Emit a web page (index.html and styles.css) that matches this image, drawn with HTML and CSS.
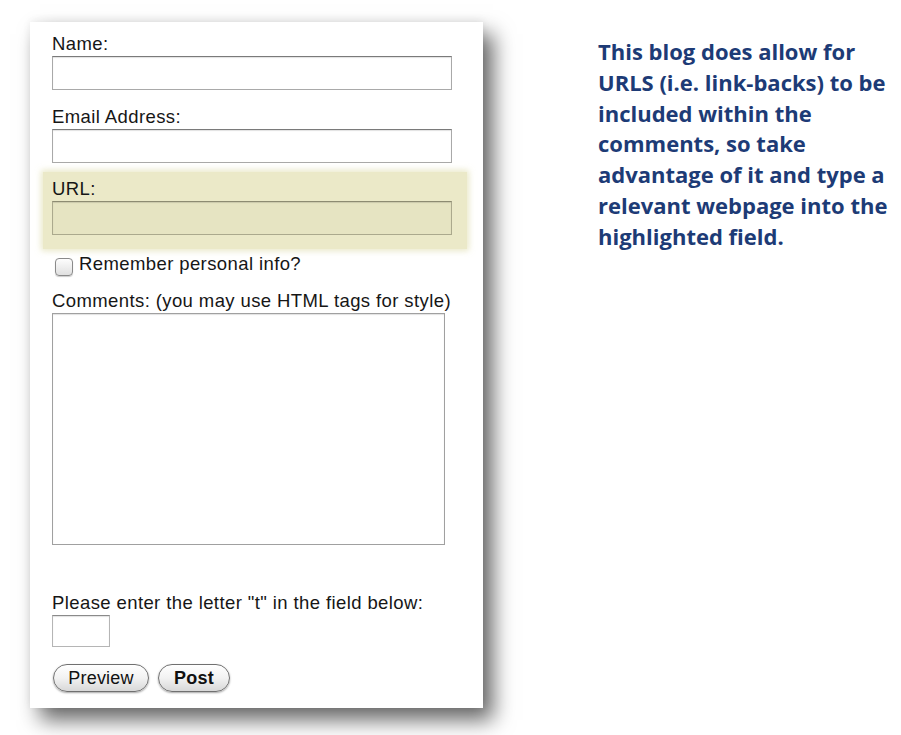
FILE: index.html
```html
<!DOCTYPE html>
<html>
<head>
<meta charset="utf-8">
<link rel="stylesheet" href="styles.css">
</head>
<body>
<div class="page">
  <form class="card">
    <div class="field">
      <label class="lbl">Name:</label>
      <div class="input wide"></div>
    </div>
    <div class="field email">
      <label class="lbl">Email Address:</label>
      <div class="input wide"></div>
    </div>
    <div class="field hl">
      <label class="lbl">URL:</label>
      <div class="input wide url"></div>
    </div>
    <div class="remember">
      <span class="checkbox"></span>
      <span class="lbl">Remember personal info?</span>
    </div>
    <div class="field comments">
      <label class="lbl">Comments: (you may use HTML tags for style)</label>
      <div class="input textarea"></div>
    </div>
    <div class="field captcha">
      <label class="lbl">Please enter the letter "t" in the field below:</label>
      <div class="input small"></div>
    </div>
    <div class="buttons">
      <span class="btn preview">Preview</span>
      <span class="btn post">Post</span>
    </div>
  </form>
  <p class="note">This blog does allow for<br>URLS (i.e. link-backs) to be<br>included within the<br>comments, so take<br>advantage of it and type a<br>relevant webpage into the<br>highlighted field.</p>
</div>
</body>
</html>
```
FILE: styles.css
```css
html, body {
  margin: 0;
  padding: 0;
  background: #ffffff;
}
.page {
  width: 901px;
  height: 735px;
  display: flex;
  align-items: flex-start;
  overflow: hidden;
}
.card {
  margin: 22px 0 0 30px;
  width: 453px;
  height: 686px;
  flex: none;
  box-sizing: border-box;
  background: #fff;
  box-shadow: 10px 12px 20px rgba(0,0,0,0.6), 0 -2px 8px rgba(0,0,0,0.06);
  padding: 12px 0 0 22px;
  display: flex;
  flex-direction: column;
  font-family: "Liberation Sans", Arial, sans-serif;
  font-size: 18.5px;
  letter-spacing: 0.4px;
  color: #161616;
}
.lbl {
  display: block;
  line-height: 20px;
  height: 20px;
  white-space: nowrap;
}
.field {
  display: flex;
  flex-direction: column;
  gap: 2px;
}
.input {
  box-sizing: border-box;
  border: 1px solid #a9a9a9;
  border-top-color: #7a7a7a;
  background: #fff;
  box-shadow: inset 0 1px 1px rgba(0,0,0,0.12);
}
.wide {
  width: 400px;
  height: 34px;
}
.email { margin-top: 17px; }
.hl {
  margin-top: 9px;
  margin-left: -9px;
  width: 424px;
  padding: 7px 0 14px 9px;
  box-sizing: border-box;
  background: #ebe9c8;
  box-shadow: 0 0 6px 2px rgba(225,223,178,0.7);
}
.url {
  background: #e6e4c2;
  border-color: #aba98d;
  border-top-color: #8d8b72;
}
.remember {
  margin-top: 9px;
  height: 22px;
  display: flex;
  align-items: flex-start;
  gap: 6px;
  padding-left: 3px;
}
.remember .lbl { margin-top: -4px; }
.checkbox {
  width: 18px;
  height: 18px;
  flex: none;
  box-sizing: border-box;
  border: 1px solid #8a8a8a;
  border-radius: 4px;
  background: linear-gradient(#fdfdfd, #e0e0e0);
  box-shadow: 0 1px 1px rgba(0,0,0,0.2);
}
.comments { margin-top: 11px; }
.textarea {
  width: 393px;
  height: 232px;
  border-color: #a0a0a0;
}
.captcha { margin-top: 48px; }
.small {
  width: 58px;
  height: 32px;
  border-color: #b5b5b5;
  border-top-color: #8a8a8a;
}
.buttons {
  margin-top: 17px;
  display: flex;
  gap: 9px;
  padding-left: 1px;
}
.btn {
  display: inline-flex;
  align-items: center;
  justify-content: center;
  height: 28px;
  box-sizing: border-box;
  border: 1px solid #707070;
  border-radius: 14px;
  background: linear-gradient(#ffffff 0%, #f2f2f2 50%, #d8d8d8 100%);
  box-shadow: 0 1px 2px rgba(0,0,0,0.35);
  font-size: 18px;
  letter-spacing: 0.2px;
  color: #111;
}
.preview { width: 96px; }
.post { font-weight: bold; width: 72px; }
.note {
  margin: 36px 0 0 115px;
  flex: none;
  white-space: nowrap;
  font-family: "Open Sans", "Liberation Sans", sans-serif;
  font-weight: bold;
  font-size: 22px;
  letter-spacing: 0;
  line-height: 30.8px;
  color: #1d3b76;
}
```
